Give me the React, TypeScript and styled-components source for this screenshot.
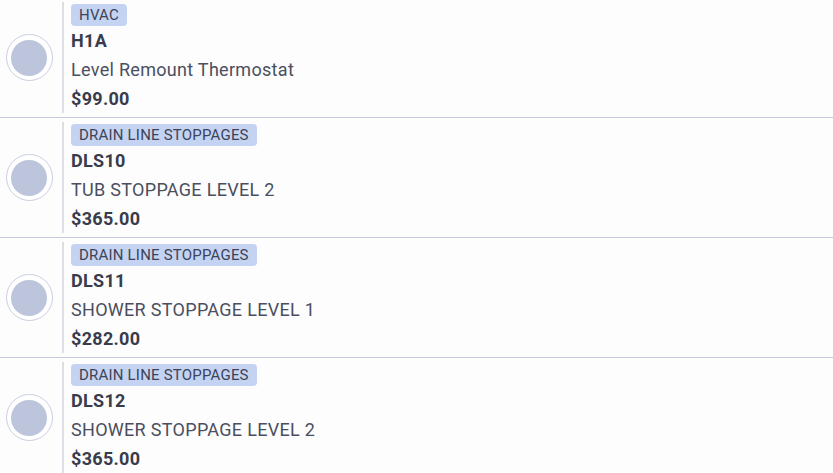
import React from 'react';
import styled, { createGlobalStyle } from 'styled-components';

const GlobalStyle = createGlobalStyle`
  html, body {
    margin: 0;
    padding: 0;
    background: #fdfdfd;
    font-family: Roboto, "Noto Sans", "Liberation Sans", sans-serif;
    overflow: hidden;
  }
`;

const List = styled.div`
  display: flex;
  flex-direction: column;
  margin-top: -2px;
`;

const Row = styled.div`
  display: flex;
  align-items: stretch;
  height: 120px;
  box-sizing: border-box;
  border-bottom: 1px solid #c6cde2;
`;

const RadioCol = styled.div`
  width: 62px;
  display: flex;
  align-items: center;
  justify-content: center;
  flex-shrink: 0;
`;

const Radio = styled.div`
  width: 47px;
  height: 47px;
  box-sizing: border-box;
  border-radius: 50%;
  border: 1.5px solid #c9cfe2;
  background: #fff;
  display: flex;
  align-items: center;
  justify-content: center;
  margin-left: -4px;
`;

const RadioDot = styled.div`
  width: 36px;
  height: 36px;
  border-radius: 50%;
  background: #bdc5dc;
`;

const Body = styled.div`
  flex: 1;
  margin: 4px 0 4px 0;
  border-left: 2px solid #dcdfe6;
  padding: 2px 0 0 7px;
  display: flex;
  flex-direction: column;
  align-items: flex-start;
`;

const Tag = styled.span`
  display: inline-flex;
  align-items: center;
  height: 22px;
  padding: 0 8px;
  border-radius: 4px;
  background: #c4d3f1;
  color: #3d4358;
  font-size: 15px;
  letter-spacing: 0.2px;
`;

const Line = styled.div<{ $bold?: boolean }>`
  height: 29px;
  line-height: 29px;
  font-size: 18px;
  letter-spacing: 0.3px;
  font-weight: ${(p) => (p.$bold ? 700 : 400)};
  color: ${(p) => (p.$bold ? '#383c4b' : '#4a4f5f')};
  white-space: nowrap;
`;

type Item = { category: string; code: string; name: string; price: string };

const items: Item[] = [
  { category: 'HVAC', code: 'H1A', name: 'Level Remount Thermostat', price: '$99.00' },
  { category: 'DRAIN LINE STOPPAGES', code: 'DLS10', name: 'TUB STOPPAGE LEVEL 2', price: '$365.00' },
  { category: 'DRAIN LINE STOPPAGES', code: 'DLS11', name: 'SHOWER STOPPAGE LEVEL 1', price: '$282.00' },
  { category: 'DRAIN LINE STOPPAGES', code: 'DLS12', name: 'SHOWER STOPPAGE LEVEL 2', price: '$365.00' },
];

const App: React.FC = () => {
  return (
    <>
      <GlobalStyle />
      <List>
        {items.map((item) => (
          <Row key={item.code}>
            <RadioCol>
              <Radio>
                <RadioDot />
              </Radio>
            </RadioCol>
            <Body>
              <Tag>{item.category}</Tag>
              <Line $bold>{item.code}</Line>
              <Line>{item.name}</Line>
              <Line $bold>{item.price}</Line>
            </Body>
          </Row>
        ))}
      </List>
    </>
  );
};

export default App;
